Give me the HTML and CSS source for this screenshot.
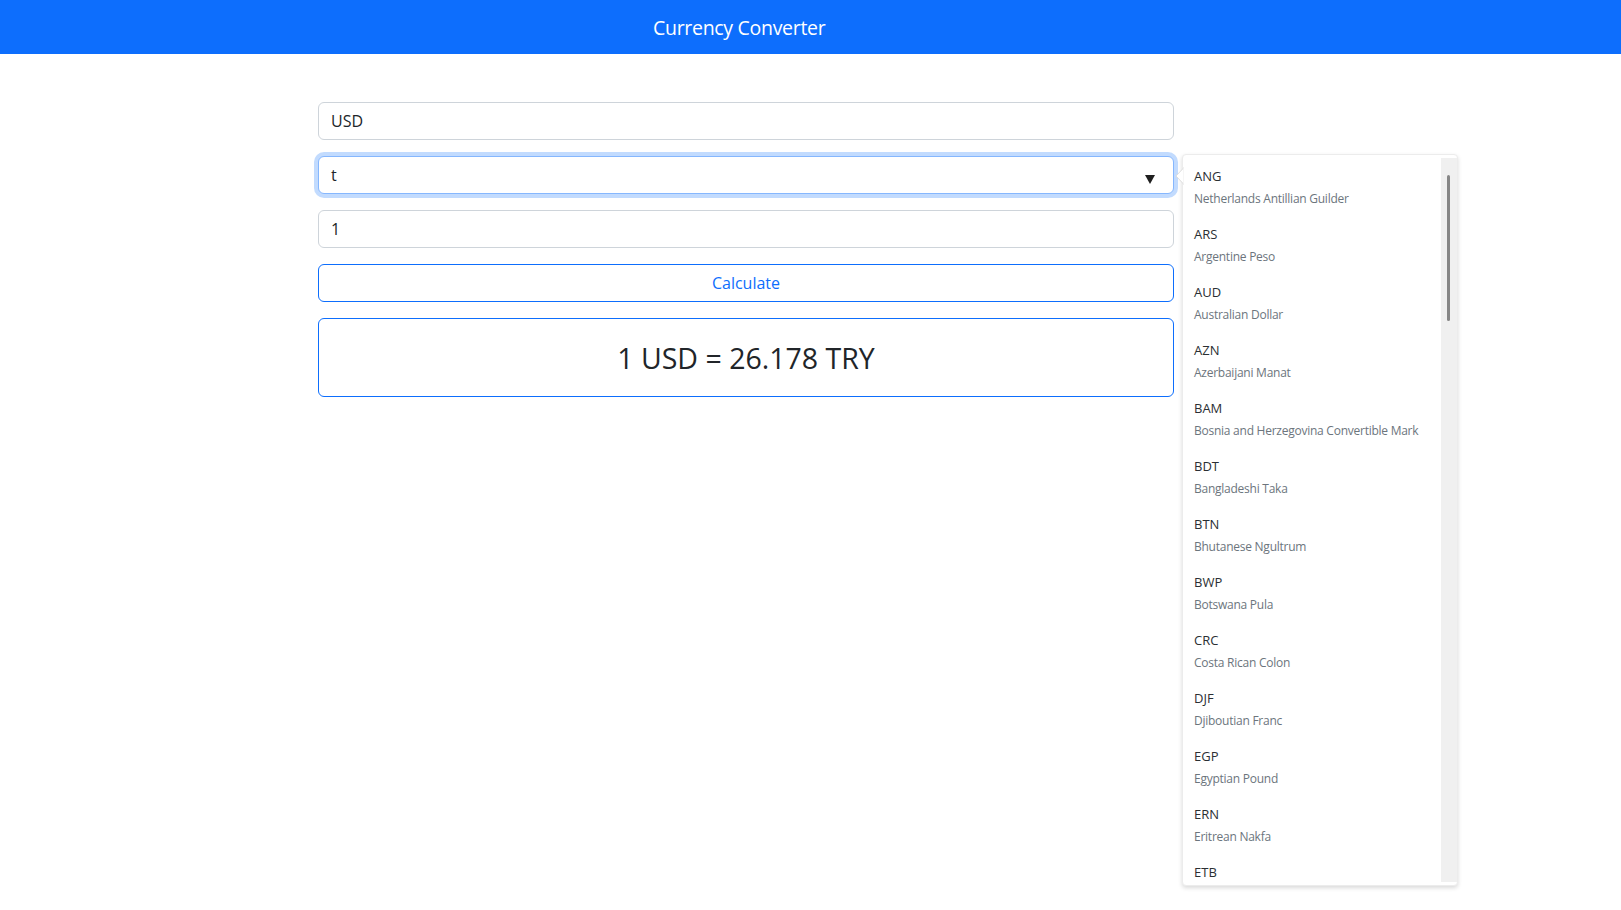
FILE: index.html
```html
<!DOCTYPE html>
<html lang="en">
<head>
<meta charset="utf-8">
<title>Currency Converter</title>
<link rel="stylesheet" href="styles.css">
</head>
<body>
<header class="topbar">
  <span class="brand">Currency Converter</span>
</header>
<main class="page">
  <form class="converter">
    <input class="field" type="text" value="USD">
    <div class="field field-focus">
      <span>t</span>
      <svg class="caret" width="10" height="9" viewBox="0 0 10 9"><polygon points="0,0 10,0 5,9" fill="#1f1f1f"/></svg>
    </div>
    <input class="field" type="text" value="1">
    <button class="btn" type="button">Calculate</button>
    <div class="result">1 USD = 26.178 TRY</div>
  </form>
  <div class="suggest">
    <svg class="pointer" width="9" height="18" viewBox="0 0 9 18"><polygon points="9,0.5 1,9 9,17.5" fill="#fff" stroke="#dcdcdc" stroke-width="1"/><rect x="8.5" y="1" width="1" height="16" fill="#fff"/></svg>
    <div class="suggest-list">
      <div class="item"><div class="code">ANG</div><div class="name">Netherlands Antillian Guilder</div></div>
      <div class="item"><div class="code">ARS</div><div class="name">Argentine Peso</div></div>
      <div class="item"><div class="code">AUD</div><div class="name">Australian Dollar</div></div>
      <div class="item"><div class="code">AZN</div><div class="name">Azerbaijani Manat</div></div>
      <div class="item"><div class="code">BAM</div><div class="name">Bosnia and Herzegovina Convertible Mark</div></div>
      <div class="item"><div class="code">BDT</div><div class="name">Bangladeshi Taka</div></div>
      <div class="item"><div class="code">BTN</div><div class="name">Bhutanese Ngultrum</div></div>
      <div class="item"><div class="code">BWP</div><div class="name">Botswana Pula</div></div>
      <div class="item"><div class="code">CRC</div><div class="name">Costa Rican Colon</div></div>
      <div class="item"><div class="code">DJF</div><div class="name">Djiboutian Franc</div></div>
      <div class="item"><div class="code">EGP</div><div class="name">Egyptian Pound</div></div>
      <div class="item"><div class="code">ERN</div><div class="name">Eritrean Nakfa</div></div>
      <div class="item last"><div class="code">ETB</div></div>
    </div>
    <div class="track"><div class="thumb"></div></div>
  </div>
</main>
</body>
</html>
```
FILE: styles.css
```css
* { box-sizing: border-box; }
html, body { margin: 0; padding: 0; }
body {
  font-family: "Open Sans", "Noto Sans", sans-serif;
  color: #212529;
  background: #fff;
  font-size: 16px;
  line-height: 1.5;
  min-height: 910px;
}
.topbar {
  height: 54px;
  background: #0d6efd;
  display: flex;
  align-items: center;
  padding-left: 653px;
}
.brand {
  color: #fff;
  font-size: 19.5px;
  letter-spacing: -0.3px;
  line-height: 30px;
  padding-top: 1px;
}
.page {
  display: flex;
  align-items: flex-start;
  gap: 8px;
  padding: 48px 0 0 318px;
}
.converter {
  width: 856px;
  flex: none;
  display: flex;
  flex-direction: column;
  gap: 16px;
  margin: 0;
}
.field {
  display: flex;
  align-items: center;
  justify-content: space-between;
  width: 100%;
  height: 38px;
  padding: 6px 12px;
  border: 1px solid #ced4da;
  border-radius: 6px;
  font-family: inherit;
  font-size: 16px;
  line-height: 24px;
  color: #212529;
  background: #fff;
  outline: none;
  margin: 0;
}
.field-focus {
  border-color: #86b7fe;
  box-shadow: 0 0 0 4px rgba(13, 110, 253, 0.25);
  padding-right: 18px;
}
.caret { margin-top: 8px; }
.suggest {
  position: relative;
  margin-top: 52px;
  width: 276px;
  height: 732px;
  flex: none;
  background: #fff;
  border: 1px solid #ececec;
  border-radius: 4px;
  box-shadow: 0 2px 4px rgba(0, 0, 0, 0.15);
  display: flex;
  padding: 3px 0;
}
.pointer {
  position: absolute;
  left: -8px;
  top: 12px;
}
.suggest-list {
  flex: 1;
  overflow: hidden;
}
.item {
  height: 58px;
  padding: 9px 12px 8px 11px;
}
.item.last { height: 24px; }
.code {
  font-size: 13px;
  line-height: 18px;
  color: #2b2f33;
}
.name {
  font-size: 12px;
  letter-spacing: -0.25px;
  line-height: 18px;
  margin-top: 5px;
  color: #6c757d;
  white-space: nowrap;
}
.track {
  width: 16px;
  background: #f0f0f0;
  position: relative;
  flex: none;
}
.thumb {
  position: absolute;
  left: 6px;
  top: 17px;
  width: 3px;
  height: 146px;
  border-radius: 2px;
  background: #878787;
}
.btn {
  height: 38px;
  width: 100%;
  border: 1px solid #0d6efd;
  border-radius: 6px;
  background: #fff;
  color: #0d6efd;
  font-family: inherit;
  font-size: 16px;
  line-height: 24px;
  padding: 6px 12px;
  margin: 0;
}
.result {
  border: 1px solid #0d6efd;
  border-radius: 6px;
  text-align: center;
  font-size: 28.5px;
  line-height: 33.6px;
  padding: 23px 0 20px;
}
```
